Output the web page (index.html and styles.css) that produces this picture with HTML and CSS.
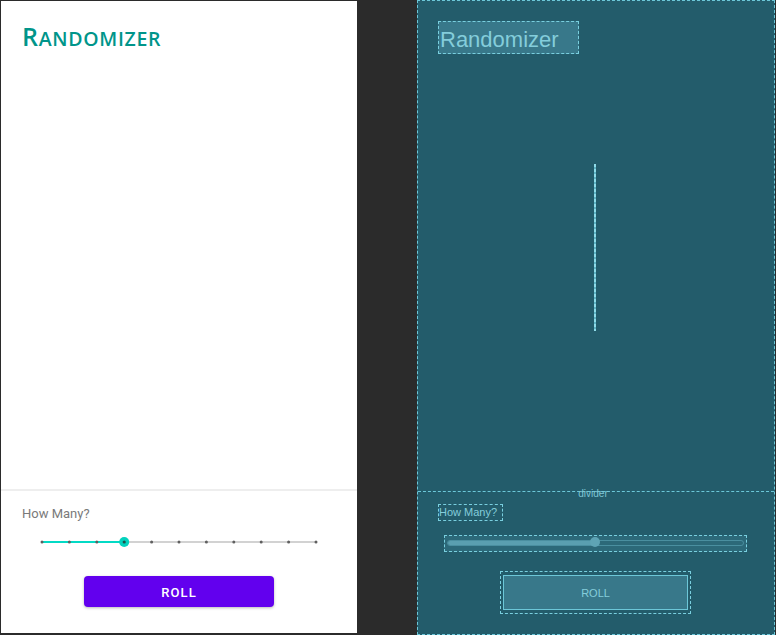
FILE: index.html
```html
<!DOCTYPE html>
<html>
<head>
<meta charset="utf-8">
<link rel="stylesheet" href="styles.css">
</head>
<body>
<div class="screen">
  <div class="app">
    <div class="title">R<span class="title-sc">andomizer</span></div>
    <div class="spacer"></div>
    <div class="divider"></div>
    <div class="controls">
      <div class="label">How Many?</div>
      <svg class="slider" width="284" height="16" viewBox="0 0 284 16">
        <line x1="5" y1="8" x2="279" y2="8" stroke="#d2d2d2" stroke-width="2"/>
        <line x1="5" y1="8" x2="87" y2="8" stroke="#03dac5" stroke-width="2"/>
        <g fill="#5f5f5f">
          <circle cx="5" cy="8" r="1.5"/>
          <circle cx="32.4" cy="8" r="1.5"/>
          <circle cx="59.8" cy="8" r="1.5"/>
          <circle cx="114.6" cy="8" r="1.5"/>
          <circle cx="142" cy="8" r="1.5"/>
          <circle cx="169.4" cy="8" r="1.5"/>
          <circle cx="196.8" cy="8" r="1.5"/>
          <circle cx="224.2" cy="8" r="1.5"/>
          <circle cx="251.6" cy="8" r="1.5"/>
          <circle cx="279" cy="8" r="1.5"/>
        </g>
        <circle cx="87.2" cy="8" r="5" fill="#03d2bd"/>
        <circle cx="87.2" cy="8" r="1.6" fill="#1f4f4a"/>
      </svg>
      <button class="roll">ROLL</button>
    </div>
  </div>

  <div class="blueprint">
    <div class="bp-top">
      <div class="bp-title">Randomizer</div>
      <div class="bp-vline"></div>
    </div>
    <div class="bp-bottom">
      <div class="bp-divider-label">divider</div>
      <div class="bp-label">How Many?</div>
      <div class="bp-slider">
        <div class="bp-track">
          <div class="bp-fill"></div>
          <div class="bp-thumb"></div>
        </div>
      </div>
      <div class="bp-button-outer">
        <div class="bp-button">ROLL</div>
      </div>
    </div>
  </div>
</div>
</body>
</html>
```

FILE: styles.css
```css
html, body {
  margin: 0;
  padding: 0;
  background: #2b2b2b;
}

.screen {
  display: flex;
  align-items: flex-start;
  width: 776px;
  height: 635px;
  overflow: hidden;
}

/* ---------- App preview ---------- */
.app {
  width: 356px;
  height: 632px;
  margin: 1px 0 0 1px;
  background: #ffffff;
  display: flex;
  flex-direction: column;
}

.title {
  margin: 19px 0 0 21px;
  font-family: "Open Sans", sans-serif;
  font-size: 25px;
  line-height: 32px;
  font-weight: 600;
  color: #00958a;
  letter-spacing: 0.7px;
}

.title-sc {
  font-size: 19.5px;
  text-transform: uppercase;
  letter-spacing: 0.7px;
}

.spacer {
  flex: 1;
}

.divider {
  height: 2px;
  background: #eeeeee;
}

.controls {
  height: 142px;
  padding-top: 15px;
  box-sizing: border-box;
  display: flex;
  flex-direction: column;
}

.label {
  margin-left: 21px;
  font-family: Roboto, sans-serif;
  font-size: 13px;
  line-height: 15px;
  color: #7a7a7a;
}

.slider {
  display: block;
  margin: 13px 0 0 36px;
}

.roll {
  display: block;
  margin: 26px auto 0;
  width: 190px;
  height: 31px;
  border: none;
  border-radius: 4px;
  background: #6200ee;
  color: #ffffff;
  font-family: Roboto, sans-serif;
  font-size: 13px;
  font-weight: 500;
  letter-spacing: 1.1px;
  line-height: 33px;
  box-shadow: 0 1px 3px rgba(0, 0, 0, 0.28);
  padding: 0;
}

/* ---------- Blueprint ---------- */
.blueprint {
  width: 358px;
  height: 635px;
  margin-left: 60px;
  box-sizing: border-box;
  border: 1px dashed #6cc7d8;
  background: #235c6b;
  display: flex;
  flex-direction: column;
}

.bp-top {
  height: 490px;
  border-bottom: 1px dashed #6cc7d8;
  display: flex;
  flex-direction: column;
}

.bp-title {
  align-self: flex-start;
  margin: 20px 0 0 20px;
  width: 141px;
  height: 33px;
  box-sizing: border-box;
  border: 1px dashed #79cfdf;
  background: #38788a;
  padding: 4px 0 0 1px;
  font-family: "Liberation Sans", Arial, sans-serif;
  font-size: 22px;
  line-height: 27px;
  color: #84cddb;
}

.bp-vline {
  align-self: center;
  margin-top: 110px;
  margin-left: -2px;
  width: 2px;
  height: 167px;
  background: repeating-linear-gradient(to bottom, #8fdbe8 0 3px, #5fb5c6 3px 5px);
}

.bp-bottom {
  flex: 1;
  display: flex;
  flex-direction: column;
}

.bp-divider-label {
  align-self: center;
  margin-top: -3px;
  margin-left: -6px;
  font-family: "Liberation Sans", Arial, sans-serif;
  font-size: 10px;
  line-height: 10px;
  color: #7fc6d4;
}

.bp-label {
  align-self: flex-start;
  margin: 5px 0 0 20px;
  width: 65px;
  height: 17px;
  box-sizing: border-box;
  border: 1px dashed #79cfdf;
  font-family: "Liberation Sans", Arial, sans-serif;
  font-size: 11px;
  line-height: 15px;
  color: #84cddb;
  white-space: nowrap;
  overflow: hidden;
  padding-left: 0;
}

.bp-slider {
  align-self: flex-start;
  margin: 14px 0 0 26px;
  width: 303px;
  height: 17px;
  box-sizing: border-box;
  border: 1px dashed #79cfdf;
  background: #2c6979;
  padding: 4px 2px 0 2px;
}

.bp-track {
  position: relative;
  height: 6px;
  border-radius: 3px;
  border: 1px solid #4a8fa0;
  box-sizing: border-box;
}

.bp-fill {
  width: 148px;
  height: 100%;
  background: #5a9fb0;
  border-radius: 3px 0 0 3px;
}

.bp-thumb {
  position: absolute;
  left: 142px;
  top: -4px;
  width: 10px;
  height: 10px;
  border-radius: 50%;
  background: #5ea4b5;
}

.bp-button-outer {
  align-self: flex-start;
  margin: 19px 0 0 82px;
  width: 191px;
  height: 43px;
  box-sizing: border-box;
  border: 1px dashed #79cfdf;
  padding: 3px 2px 3px 2px;
}

.bp-button {
  height: 100%;
  box-sizing: border-box;
  border: 1px solid #6cc7d8;
  background: #38788a;
  display: flex;
  align-items: center;
  justify-content: center;
  font-family: "Liberation Sans", Arial, sans-serif;
  font-size: 11px;
  color: #84cddb;
}
```
